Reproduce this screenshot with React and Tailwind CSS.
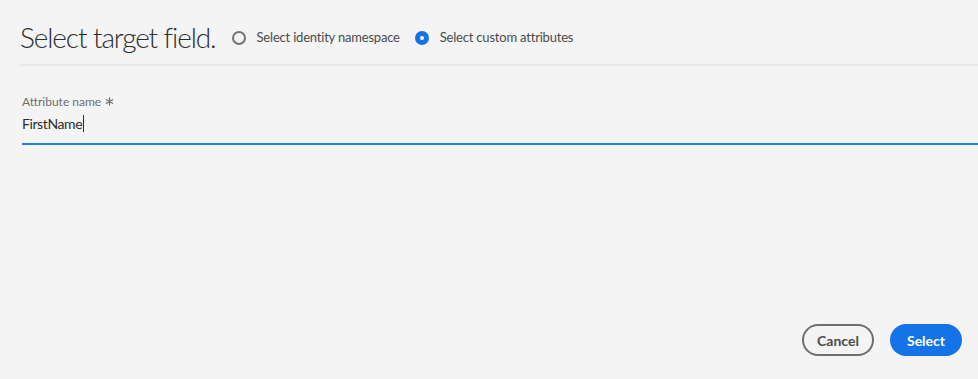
import React, { useState } from 'react';

const Radio = ({ checked, label, onClick }) => (
    <button type="button" onClick={onClick} className="flex items-center gap-[11px] text-[13px] tracking-[-0.2px] text-[#4b4b4b]">
        {checked ? (
            <span className="flex h-[14px] w-[14px] items-center justify-center rounded-full bg-[#1473e6]">
                <span className="h-[4px] w-[4px] rounded-full bg-white" />
            </span>
        ) : (
            <span className="h-[14px] w-[14px] rounded-full border-2 border-[#747474]" />
        )}
        <span>{label}</span>
    </button>
);

const Asterisk = () => (
    <svg width="9" height="9" viewBox="0 0 10 10" className="ml-[4px] inline-block align-[0px]" fill="none" stroke="#6e6e6e" strokeWidth="1.4" strokeLinecap="round">
        <path d="M5 1v8M1.5 3l7 4M8.5 3l-7 4" />
    </svg>
);

const App = () => {
    const [mode, setMode] = useState('custom');
    const name = 'FirstName';

    return (
        <div className="flex h-[379px] w-full flex-col bg-[#f4f4f4]" style={{ fontFamily: 'Lato, "Open Sans", sans-serif' }}>
            <div className="ml-5 flex h-[66px] items-center gap-[16px] border-b-2 border-[#e8e8e8] pt-[10px]">
                <h1 className="text-[28px] font-light tracking-[-1.1px] text-[#2c2c2c]">Select target field.</h1>
                <div className="flex items-center gap-[15px] pt-[2px]">
                    <Radio checked={mode === 'identity'} label="Select identity namespace" onClick={() => setMode('identity')} />
                    <Radio checked={mode === 'custom'} label="Select custom attributes" onClick={() => setMode('custom')} />
                </div>
            </div>

            <div className="pl-[22px] pt-[27px]">
                <label className="block text-[12px] text-[#6e6e6e]">
                    Attribute name<Asterisk />
                </label>
                <div className="mt-[2px] flex h-[32px] items-center border-b-2 border-[#2680eb] pb-[9px] text-[14px] tracking-[-0.4px] text-[#2c2c2c]">
                    <span>{name}</span>
                    <span className="ml-[1px] h-[17px] w-px bg-[#2c2c2c]" />
                </div>
            </div>

            <div className="mt-auto flex justify-end gap-4 pb-[23px] pr-4">
                <button type="button" className="h-8 w-[72px] rounded-full border-2 border-[#6e6e6e] text-[14px] font-bold text-[#4b4b4b]">
                    Cancel
                </button>
                <button type="button" className="h-8 w-[72px] rounded-full bg-[#1473e6] text-[14px] font-bold text-white">
                    Select
                </button>
            </div>
        </div>
    );
};

export default App;
